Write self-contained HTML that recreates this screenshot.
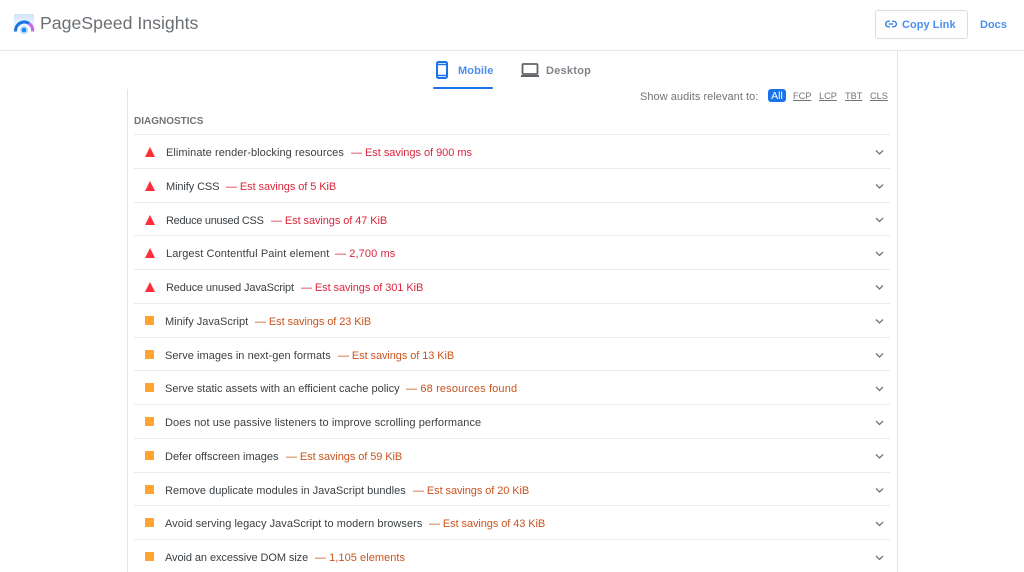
<!DOCTYPE html>
<html><head><meta charset="utf-8"><style>
html,body{margin:0;padding:0;background:#fff;width:1024px;height:572px;overflow:hidden;font-family:"Liberation Sans",sans-serif}
.a{position:absolute;white-space:nowrap}
.ln{position:absolute;left:134px;width:756px;height:1px;background:#ebebeb}
.t{position:absolute;white-space:nowrap;font-size:11px;line-height:14px;color:#3c4043;letter-spacing:0}
.r{color:#d9263c;letter-spacing:-.08px}.o{color:#c9541e;letter-spacing:-.08px}
.sq{position:absolute;left:145px;width:9px;height:8.5px;background:#ffa42e}
.tri{position:absolute;left:145px;width:0;height:0;border-left:5.5px solid transparent;border-right:5.5px solid transparent;border-bottom:10px solid #ff2d3a}
.f{position:absolute;top:90px;font-size:9.2px;line-height:13px;color:#70757a;text-decoration:underline}
</style></head><body>
<div class="a" style="left:0;top:50px;width:1024px;height:1px;background:#e8e8e8"></div>
<div class="a" style="left:127px;top:89px;width:1px;height:483px;background:#e4e4e4"></div>
<div class="a" style="left:897px;top:51px;width:1px;height:521px;background:#e4e4e4"></div>
<svg class="a" style="left:13px;top:13px" width="22" height="22" viewBox="0 0 22 22"><defs><linearGradient id="g" x1="0" y1="0" x2="0" y2="1"><stop offset="0" stop-color="#cfe3fb"/><stop offset="1" stop-color="#f2f8ff"/></linearGradient></defs><rect x="1" y="1" width="20" height="12" rx="1" fill="url(#g)"/><circle cx="11" cy="17" r="4.2" fill="#c5e0fb"/><path d="M2.6 18.5A8.7 8.7 0 0 1 16 10.4" fill="none" stroke="#1a73e8" stroke-width="3.2"/><path d="M16 10.4A8.7 8.7 0 0 1 19.6 18.5" fill="none" stroke="#c46ae8" stroke-width="3.2"/><circle cx="11" cy="17" r="2.4" fill="#1a8cf0"/></svg>
<div class="a" style="left:40px;top:12px;font-size:17.7px;line-height:22px;color:#6b7075">PageSpeed Insights</div>
<div class="a" style="left:875px;top:10px;width:91px;height:27px;border:1px solid #dadce0;border-radius:3px"></div>
<svg class="a" style="left:885px;top:19px" width="12" height="10" viewBox="0 0 12 10"><path d="M5 2.2H3.4a2.8 2.8 0 0 0 0 5.6H5M7 2.2h1.6a2.8 2.8 0 0 1 0 5.6H7M3.8 5h4.4" fill="none" stroke="#1a73e8" stroke-width="1.2"/></svg>
<div class="a" style="left:902px;top:18px;font-size:11px;line-height:14px;font-weight:700;color:#4a8fee;letter-spacing:.05px">Copy Link</div>
<div class="a" style="left:980px;top:18px;font-size:11px;line-height:14px;font-weight:700;color:#4a8fee">Docs</div>
<svg class="a" style="left:434px;top:60px" width="16" height="20" viewBox="0 0 16 20"><rect x="3" y="2" width="10" height="16" rx="1.5" fill="none" stroke="#1a73e8" stroke-width="2"/><path d="M3 4.5h10M3 15.5h10" stroke="#1a73e8" stroke-width="1.5"/></svg>
<div class="a" style="left:458px;top:64px;font-size:11px;line-height:14px;font-weight:700;color:#4a8fee;letter-spacing:.1px">Mobile</div>
<div class="a" style="left:433px;top:87px;width:60px;height:2px;background:#1a73e8;border-radius:1px"></div>
<svg class="a" style="left:520px;top:62px" width="20" height="16" viewBox="0 0 20 16"><rect x="2.5" y="2" width="15" height="10" rx="1" fill="none" stroke="#5f6368" stroke-width="1.8"/><path d="M1 14h18" stroke="#5f6368" stroke-width="2"/></svg>
<div class="a" style="left:546px;top:64px;font-size:11px;line-height:14px;font-weight:700;color:#80858a;letter-spacing:.25px">Desktop</div>
<div class="a" style="left:640px;top:90px;font-size:11px;line-height:14px;color:#70757a;letter-spacing:.04px">Show audits relevant to:</div>
<div class="a" style="left:768px;top:89px;width:18px;height:13px;background:#1a73e8;border-radius:3px;color:#fff;font-size:10.5px;line-height:14px;text-align:center">All</div>
<div class="f" style="left:793px">FCP</div><div class="f" style="left:819px">LCP</div><div class="f" style="left:845px">TBT</div><div class="f" style="left:870px">CLS</div>
<div class="a" style="left:134px;top:113px;font-size:10px;line-height:14px;font-weight:700;color:#70757a;letter-spacing:0"><span style="position:relative;top:2px">DIAGNOSTICS</span></div>
<div class="ln" style="top:134px"></div><div class="ln" style="top:168px"></div><div class="ln" style="top:202px"></div><div class="ln" style="top:235px"></div><div class="ln" style="top:269px"></div><div class="ln" style="top:303px"></div><div class="ln" style="top:337px"></div><div class="ln" style="top:370px"></div><div class="ln" style="top:404px"></div><div class="ln" style="top:438px"></div><div class="ln" style="top:472px"></div><div class="ln" style="top:505px"></div><div class="ln" style="top:539px"></div>

<div class="tri" style="top:147px"></div><div class="t" style="left:166px;top:146px;letter-spacing:.07px">Eliminate render-blocking resources</div><div class="t r" style="left:351px;top:146px;letter-spacing:-.03px">— Est savings of 900 ms</div>
<div class="tri" style="top:181px"></div><div class="t" style="left:166px;top:180px;letter-spacing:-.1px">Minify CSS</div><div class="t r" style="left:226px;top:180px">— Est savings of 5 KiB</div>
<div class="tri" style="top:215px"></div><div class="t" style="left:166px;top:214px;letter-spacing:-.3px">Reduce unused CSS</div><div class="t r" style="left:271px;top:214px">— Est savings of 47 KiB</div>
<div class="tri" style="top:248px"></div><div class="t" style="left:166px;top:247px;letter-spacing:.1px">Largest Contentful Paint element</div><div class="t r" style="left:335px;top:247px;letter-spacing:.1px">— 2,700 ms</div>
<div class="tri" style="top:282px"></div><div class="t" style="left:166px;top:281px;letter-spacing:-.15px">Reduce unused JavaScript</div><div class="t r" style="left:301px;top:281px">— Est savings of 301 KiB</div>
<div class="sq" style="top:316px"></div><div class="t" style="left:165px;top:315px">Minify JavaScript</div><div class="t o" style="left:255px;top:315px">— Est savings of 23 KiB</div>
<div class="sq" style="top:350px"></div><div class="t" style="left:165px;top:349px;letter-spacing:.04px">Serve images in next-gen formats</div><div class="t o" style="left:338px;top:349px">— Est savings of 13 KiB</div>
<div class="sq" style="top:383px"></div><div class="t" style="left:165px;top:382px">Serve static assets with an efficient cache policy</div><div class="t o" style="left:406px;top:382px;letter-spacing:.15px">— 68 resources found</div>
<div class="sq" style="top:417px"></div><div class="t" style="left:165px;top:416px;letter-spacing:.07px">Does not use passive listeners to improve scrolling performance</div>
<div class="sq" style="top:451px"></div><div class="t" style="left:165px;top:450px">Defer offscreen images</div><div class="t o" style="left:286px;top:450px">— Est savings of 59 KiB</div>
<div class="sq" style="top:485px"></div><div class="t" style="left:165px;top:484px;letter-spacing:.01px">Remove duplicate modules in JavaScript bundles</div><div class="t o" style="left:413px;top:484px">— Est savings of 20 KiB</div>
<div class="sq" style="top:518px"></div><div class="t" style="left:165px;top:517px;letter-spacing:.04px">Avoid serving legacy JavaScript to modern browsers</div><div class="t o" style="left:429px;top:517px">— Est savings of 43 KiB</div>
<div class="sq" style="top:552px"></div><div class="t" style="left:165px;top:551px;letter-spacing:-.08px">Avoid an excessive DOM size</div><div class="t o" style="left:315px;top:551px;letter-spacing:.05px">— 1,105 elements</div>

<svg class="a" style="left:875px;top:149px" width="9" height="412" viewBox="0 0 9 412"><g fill="none" stroke="#70757a" stroke-width="1.3"><path d="M1 1.5l3.5 3.5L8 1.5"/><path d="M1 35.5l3.5 3.5L8 35.5"/><path d="M1 69l3.5 3.5L8 69"/><path d="M1 103l3.5 3.5L8 103"/><path d="M1 136.5l3.5 3.5L8 136.5"/><path d="M1 170.5l3.5 3.5L8 170.5"/><path d="M1 204.5l3.5 3.5L8 204.5"/><path d="M1 238l3.5 3.5L8 238"/><path d="M1 272l3.5 3.5L8 272"/><path d="M1 305.5l3.5 3.5L8 305.5"/><path d="M1 339.5l3.5 3.5L8 339.5"/><path d="M1 373l3.5 3.5L8 373"/><path d="M1 407l3.5 3.5L8 407"/></g></svg>
</body></html>
